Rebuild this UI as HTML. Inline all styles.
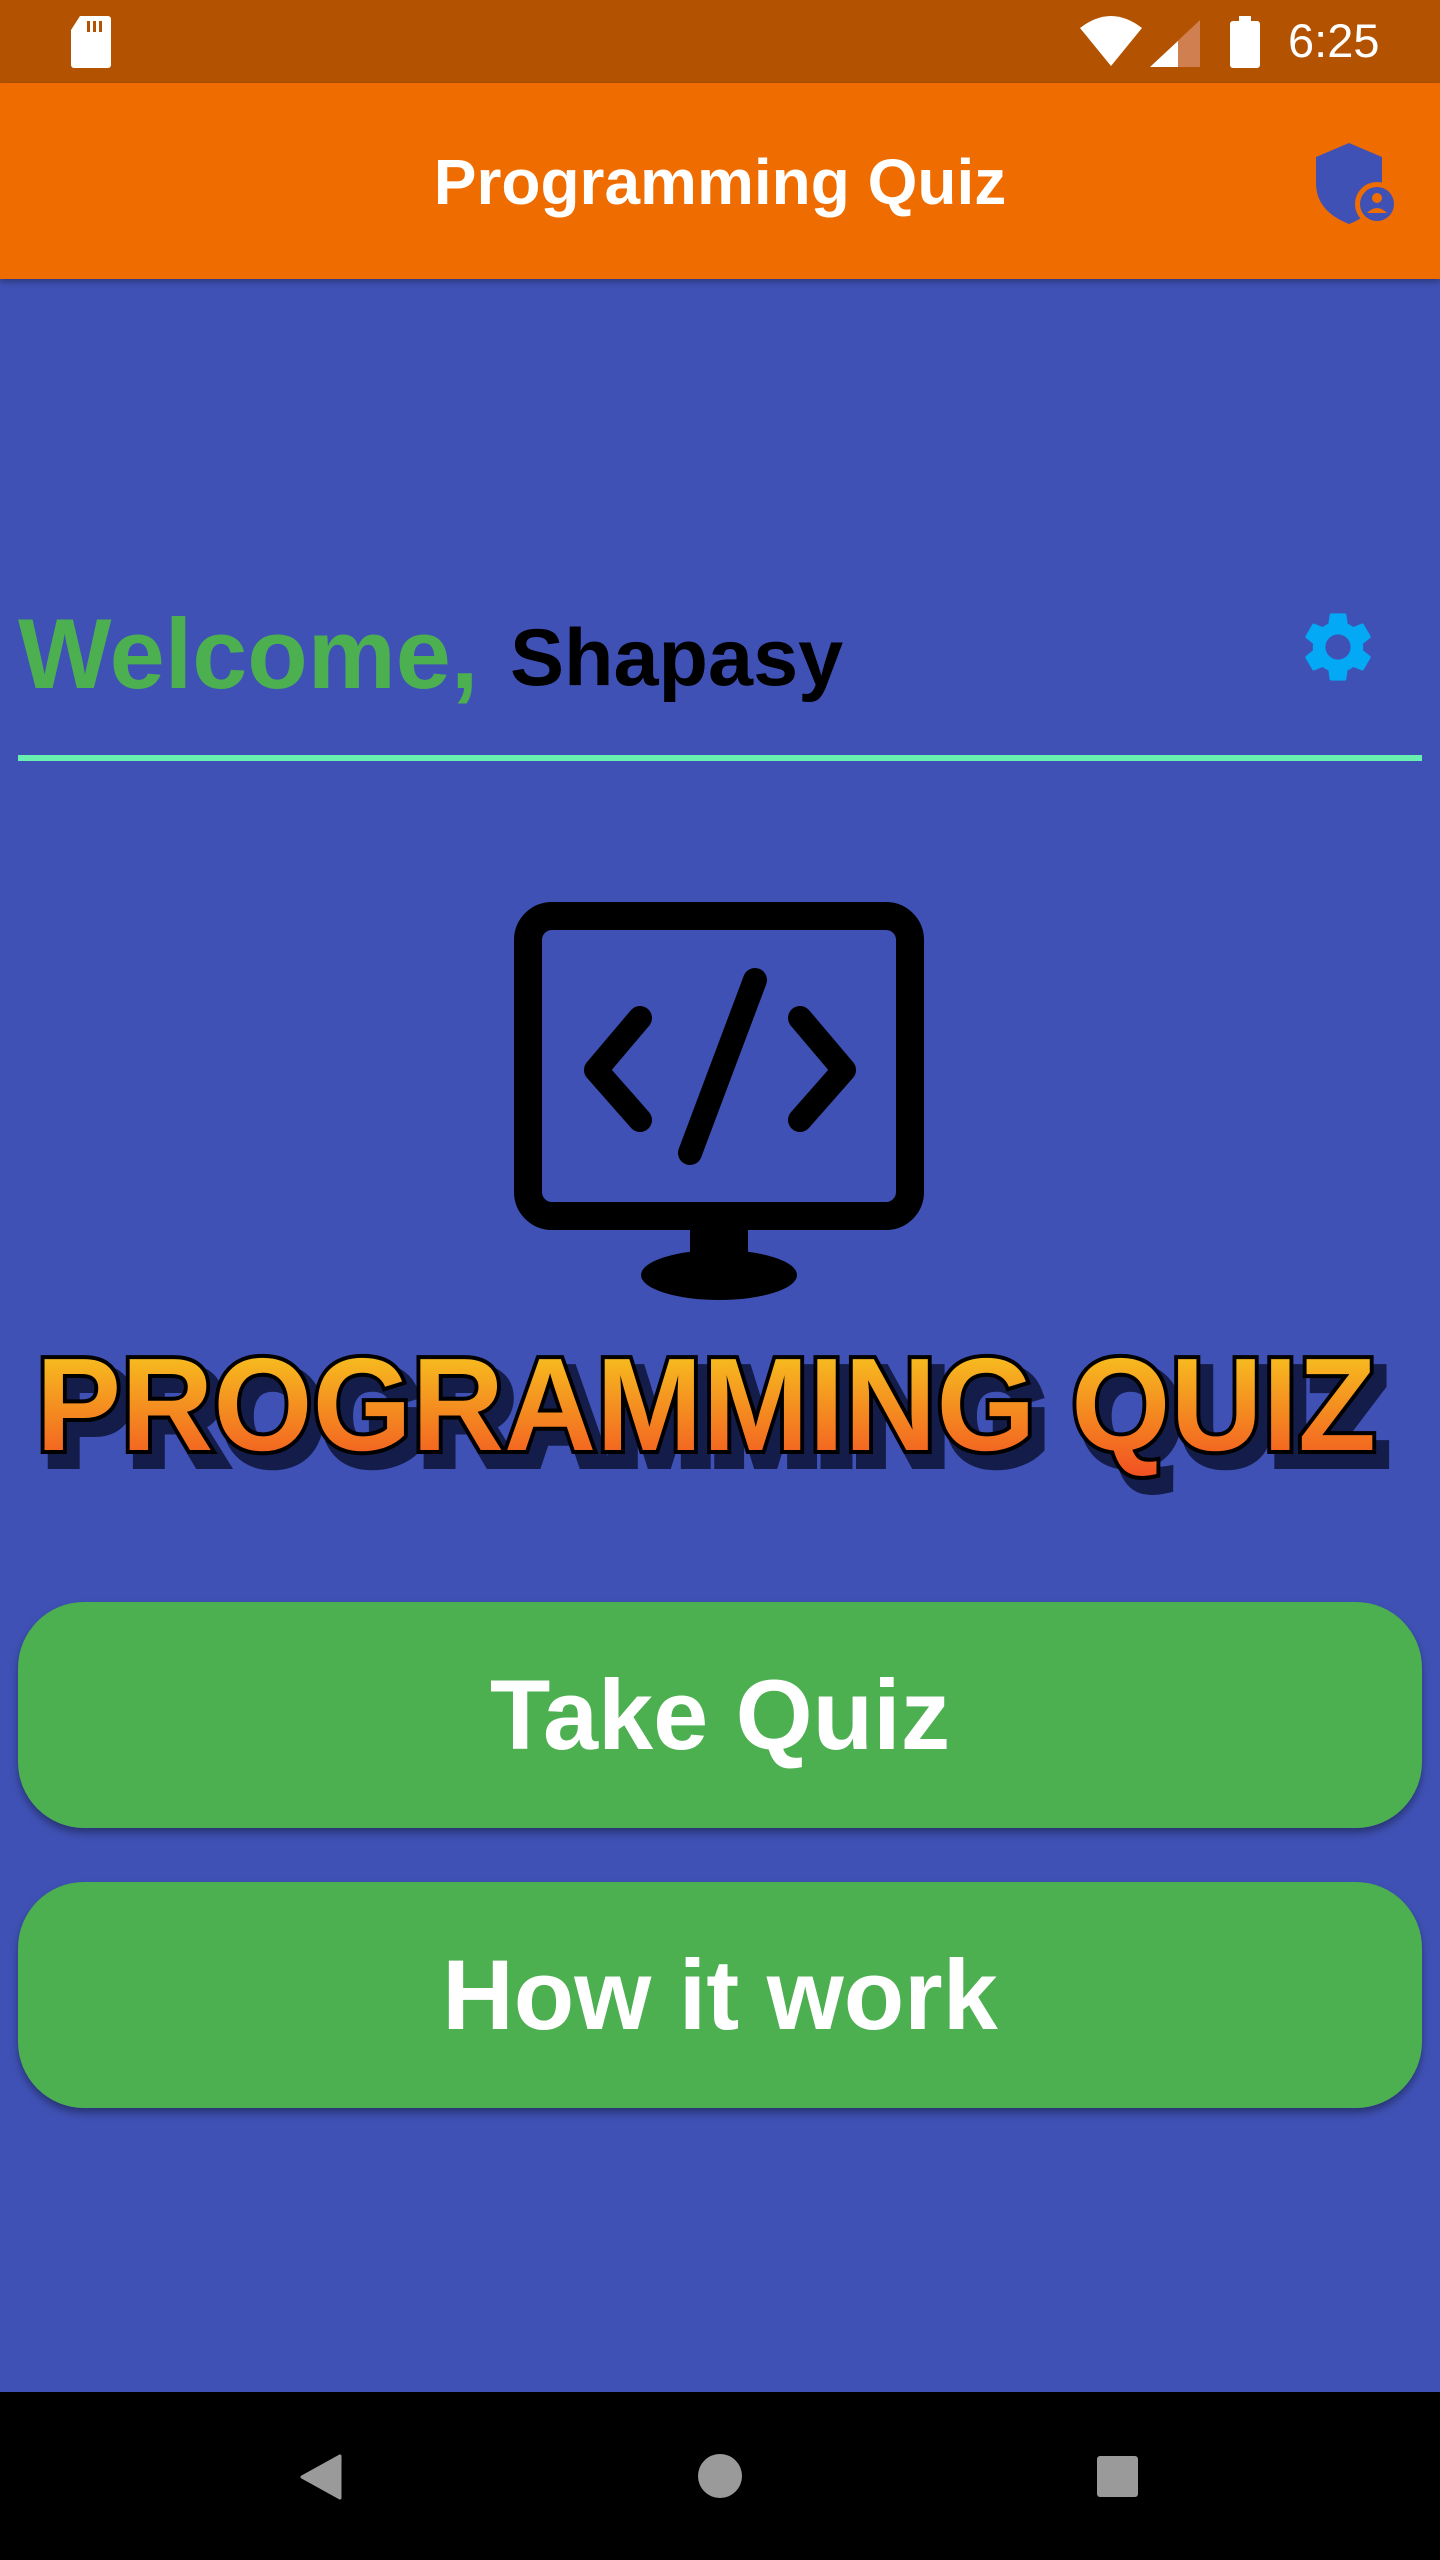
<!DOCTYPE html>
<html><head><meta charset="utf-8"><style>
*{margin:0;padding:0;box-sizing:border-box}
body{width:1440px;height:2560px;background:#3f51b5;font-family:"Liberation Sans",sans-serif;position:relative;overflow:hidden}
.abs{position:absolute}
#sb{left:0;top:0;width:1440px;height:83px;background:#b35200}
#ab{left:0;top:83px;width:1440px;height:196px;background:#ef6c00;box-shadow:0 3px 6px rgba(0,0,0,.3)}
.t{white-space:nowrap;line-height:1}
.btn{left:18px;width:1404px;height:226px;background:#4caf50;border-radius:66px;box-shadow:0 5px 8px rgba(0,0,0,.35);color:#fff;font-weight:bold;font-size:99px;text-align:center;line-height:226px}
#nav{left:0;top:2392px;width:1440px;height:168px;background:#000}
</style></head><body>
<div id="sb" class="abs">
<svg class="abs" style="left:70px;top:16px" width="42" height="52" viewBox="0 0 42 52"><path d="M10 0H38a3 3 0 0 1 3 3V49a3 3 0 0 1-3 3H4a3 3 0 0 1-3-3V14Z" fill="#fff"/><rect x="17" y="5" width="3" height="11" fill="#b35200"/><rect x="23" y="5" width="3" height="11" fill="#b35200"/><rect x="29" y="5" width="3" height="11" fill="#b35200"/></svg>
<svg class="abs" style="left:1080px;top:16px" width="62" height="50" viewBox="0 0 62 50"><path d="M31 50L0 12Q31-12 62 12Z" fill="#fff"/></svg>
<svg class="abs" style="left:1150px;top:20px" width="50" height="47" viewBox="0 0 50 47"><path d="M0 47L50 0V47Z" fill="#d08050"/><path d="M0 47L28 21V47Z" fill="#fff"/></svg>
<svg class="abs" style="left:1230px;top:16px" width="30" height="52" viewBox="0 0 30 52"><rect x="9" y="0" width="12" height="6" fill="#fff"/><rect x="0" y="5" width="30" height="47" rx="3" fill="#fff"/></svg>
<div class="abs t" style="left:1288px;top:17px;font-size:47px;color:#fff">6:25</div>
</div>
<div id="ab" class="abs">
<div class="abs t" style="left:0;width:1440px;text-align:center;top:67px;font-size:64px;font-weight:bold;color:#fff">Programming Quiz</div>
<svg class="abs" style="left:1316px;top:60px" width="82" height="82" viewBox="0 0 82 82"><path d="M0 14L33 0L66 14V40Q66 68 33 81Q0 68 0 40Z" fill="#3f51b5"/><circle cx="61" cy="61" r="22" fill="#ef6c00"/><circle cx="61" cy="61" r="17" fill="#3f51b5"/><circle cx="61" cy="55" r="5" fill="#ef6c00"/><path d="M51 70Q61 60 71 70Z" fill="#ef6c00"/></svg>
</div>
<div class="abs t" style="left:18px;top:604px;font-size:99px;font-weight:bold;color:#4caf50">Welcome,</div>
<div class="abs t" style="left:510px;top:618px;font-size:81px;font-weight:bold;color:#000">Shapasy</div>
<svg class="abs" style="left:1296px;top:605px" width="84" height="84" viewBox="0 0 24 24"><path fill="#03a9f4" d="M19.14 12.94c.04-.3.06-.61.06-.94 0-.32-.02-.64-.07-.94l2.03-1.58a.49.49 0 0 0 .12-.61l-1.92-3.32a.49.49 0 0 0-.59-.22l-2.39.96c-.5-.38-1.030-.7-1.62-.94l-.36-2.54a.48.48 0 0 0-.48-.41h-3.84c-.24 0-.43.17-.47.41l-.36 2.54c-.59.24-1.13.57-1.62.94l-2.39-.96a.48.48 0 0 0-.59.22L2.74 8.87c-.12.21-.08.47.12.61l2.03 1.58c-.05.3-.09.63-.09.94s.02.64.07.94l-2.03 1.58a.49.49 0 0 0-.12.61l1.92 3.32c.12.22.37.29.59.22l2.39-.96c.5.38 1.03.7 1.62.94l.36 2.54c.05.24.24.41.48.41h3.84c.24 0 .44-.17.47-.41l.36-2.54c.59-.24 1.13-.56 1.62-.94l2.39.96c.22.08.47 0 .59-.22l1.92-3.32c.12-.22.07-.47-.12-.61zM12 15.6A3.6 3.6 0 1 1 12 8.4a3.6 3.6 0 0 1 0 7.2z"/></svg>
<div class="abs" style="left:18px;top:755px;width:1404px;height:6px;background:#69f0ae"></div>
<svg class="abs" style="left:510px;top:900px" width="420" height="405" viewBox="0 0 420 405">
<rect x="18" y="16" width="382" height="300" rx="24" fill="none" stroke="#000" stroke-width="28"/>
<rect x="180" y="315" width="58" height="40" fill="#000"/>
<ellipse cx="209" cy="375" rx="78" ry="25" fill="#000"/>
<path d="M130 118L86 170L130 220M290 118L334 170L290 220M245 80L180 253" fill="none" stroke="#000" stroke-width="24" stroke-linecap="round" stroke-linejoin="round"/>
</svg>
<svg class="abs" style="left:0;top:1320px" width="1440" height="180" viewBox="0 0 1440 180">
<defs><linearGradient id="g" x1="0" y1="0" x2="0" y2="1"><stop offset="0" stop-color="#f7d21e"/><stop offset="1" stop-color="#f24f22"/></linearGradient></defs>
<text x="46" y="142" font-family="Liberation Sans" font-weight="bold" font-size="132" textLength="1340" lengthAdjust="spacingAndGlyphs" fill="#0a0f30" stroke="#0a0f30" stroke-width="14" opacity=".8">PROGRAMMING QUIZ</text>
<text x="36" y="130" font-family="Liberation Sans" font-weight="bold" font-size="132" textLength="1340" lengthAdjust="spacingAndGlyphs" fill="url(#g)" stroke="#000" stroke-width="8" paint-order="stroke">PROGRAMMING QUIZ</text>
</svg>
<div class="abs btn t" style="top:1602px">Take Quiz</div>
<div class="abs btn t" style="top:1882px">How it work</div>
<div id="nav" class="abs">
<svg class="abs" style="left:300px;top:62px" width="42" height="46" viewBox="0 0 42 46"><path d="M40 2V44L2 23Z" fill="#9a9a9a" stroke="#9a9a9a" stroke-width="3" stroke-linejoin="round"/></svg>
<div class="abs" style="left:698px;top:62px;width:44px;height:44px;border-radius:50%;background:#9a9a9a"></div>
<div class="abs" style="left:1097px;top:64px;width:41px;height:41px;border-radius:3px;background:#9a9a9a"></div>
</div>
</body></html>
